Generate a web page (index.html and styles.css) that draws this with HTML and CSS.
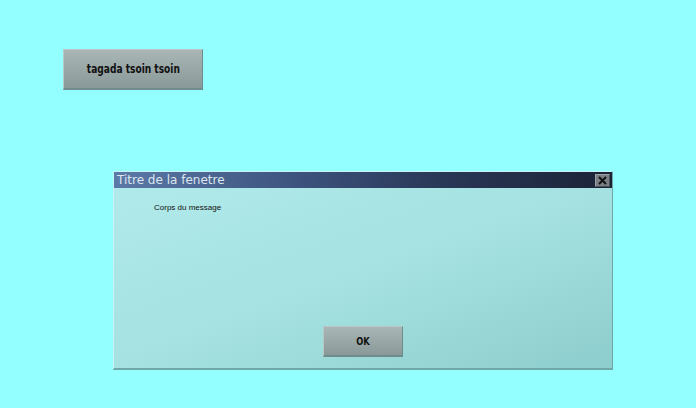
FILE: index.html
```html
<!DOCTYPE html>
<html>
<head>
<meta charset="utf-8">
<link rel="stylesheet" href="styles.css">
</head>
<body>
<div class="page">
  <button class="btn btn-main"><span class="label">tagada tsoin tsoin</span></button>
  <div class="window">
    <div class="titlebar">
      <span class="title">Titre de la fenetre</span>
      <span class="close">
        <svg width="9" height="9" viewBox="0 0 9 9"><path d="M1 1 L8 8 M8 1 L1 8" stroke="#111" stroke-width="2"/></svg>
      </span>
    </div>
    <div class="content">
      <p class="message">Corps du message</p>
      <button class="btn btn-ok"><span class="label">OK</span></button>
    </div>
  </div>
</div>
</body>
</html>
```
FILE: styles.css
```css
html, body {
  margin: 0;
  padding: 0;
}
body {
  background: #93ffff;
  width: 696px;
  height: 408px;
  overflow: hidden;
}
.page {
  padding: 49px 0 0 63px;
  display: flex;
  flex-direction: column;
  align-items: flex-start;
}
.btn {
  box-sizing: border-box;
  background: linear-gradient(#aab6b6, #899898);
  border: 1px solid;
  border-color: #b8c8c8 #6e8c8c #6e8c8c #b8c8c8;
  font-family: "DejaVu Sans Condensed", "DejaVu Sans", sans-serif;
  font-weight: bold;
  color: #111;
  padding: 0;
  margin: 0;
}
.label {
  display: inline-block;
  transform: scaleX(0.84);
}
.btn-main {
  width: 140px;
  height: 41px;
  font-size: 12px;
  border-bottom-width: 2px;
}
.window {
  box-sizing: border-box;
  margin: 81px 0 0 50px;
  width: 500px;
  height: 199px;
  border-left: 1px solid #c6f4f4;
  border-top: 1px solid #c6f4f4;
  border-right: 1px solid #6fa8a8;
  border-bottom: 2px solid #6fa8a8;
  display: flex;
  flex-direction: column;
  background: linear-gradient(160deg, #b1eaea 0%, #a6e2e2 50%, #8ecdcd 100%);
}
.titlebar {
  height: 16px;
  flex: none;
  display: flex;
  align-items: center;
  justify-content: space-between;
  background: linear-gradient(90deg, #5b7aa8 0%, #3e5580 35%, #2a3858 65%, #1b2336 100%);
  padding: 0 2px 0 3px;
}
.title {
  font-family: "DejaVu Sans", sans-serif;
  font-size: 12px;
  color: #dde6ee;
  line-height: 16px;
}
.close {
  box-sizing: border-box;
  width: 15px;
  height: 13px;
  display: flex;
  align-items: center;
  justify-content: center;
  background: #7a7f86;
  border: 1px solid;
  border-color: #9aa0a6 #4a4f56 #4a4f56 #9aa0a6;
}
.content {
  flex: 1;
  display: flex;
  flex-direction: column;
  align-items: center;
  padding: 15px 0 11px;
}
.message {
  align-self: flex-start;
  margin: 0 0 0 40px;
  font-family: "Liberation Sans", sans-serif;
  font-size: 8px;
  color: #111;
}
.btn-ok {
  margin-top: auto;
  width: 80px;
  height: 31px;
  font-size: 11px;
  border-bottom-width: 2px;
}
```
